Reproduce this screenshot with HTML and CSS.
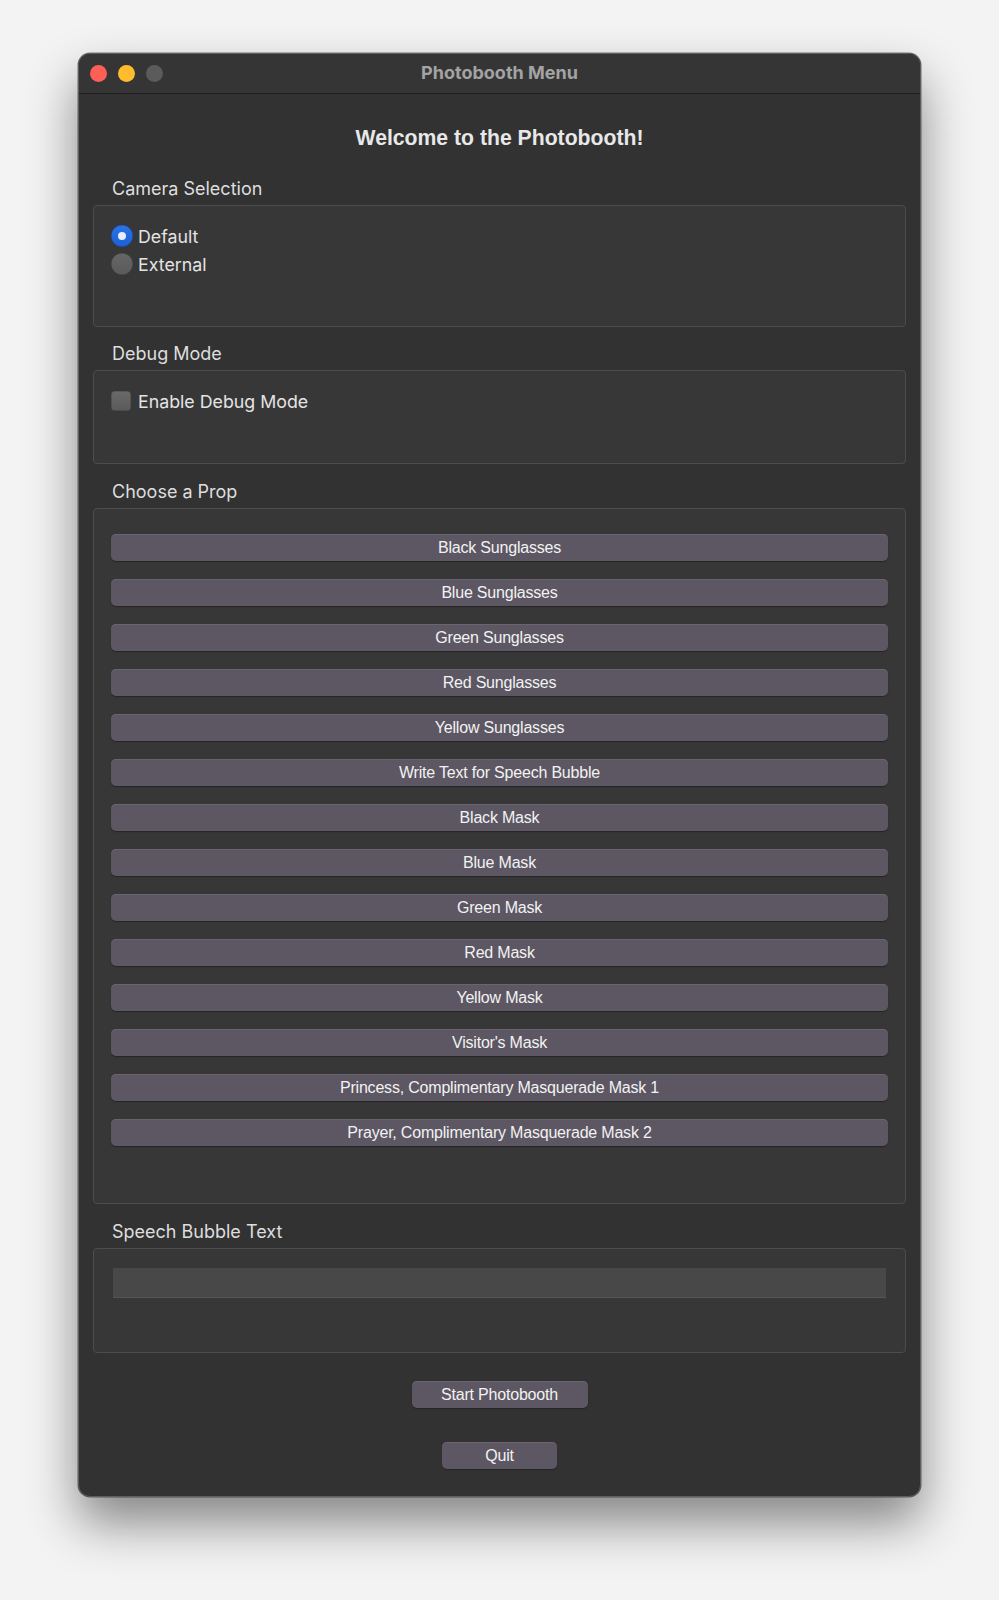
FILE: index.html
```html
<!DOCTYPE html>
<html>
<head>
<meta charset="utf-8">
<link rel="stylesheet" href="styles.css">
</head>
<body>
<div class="window">
  <div class="titlebar">
    <div class="lights">
      <span class="light red"></span>
      <span class="light yellow"></span>
      <span class="light gray"></span>
    </div>
    <div class="title">Photobooth Menu</div>
  </div>
  <div class="content">
    <h1 class="heading">Welcome to the Photobooth!</h1>

    <div class="label">Camera Selection</div>
    <div class="group group-camera">
      <div class="row"><span class="radio checked"></span><span class="opt">Default</span></div>
      <div class="row"><span class="radio"></span><span class="opt">External</span></div>
    </div>

    <div class="label">Debug Mode</div>
    <div class="group group-debug">
      <div class="row"><span class="checkbox"></span><span class="opt opt-check">Enable Debug Mode</span></div>
    </div>

    <div class="label">Choose a Prop</div>
    <div class="group group-props">
      <button class="btn">Black Sunglasses</button>
      <button class="btn">Blue Sunglasses</button>
      <button class="btn">Green Sunglasses</button>
      <button class="btn">Red Sunglasses</button>
      <button class="btn">Yellow Sunglasses</button>
      <button class="btn">Write Text for Speech Bubble</button>
      <button class="btn">Black Mask</button>
      <button class="btn">Blue Mask</button>
      <button class="btn">Green Mask</button>
      <button class="btn">Red Mask</button>
      <button class="btn">Yellow Mask</button>
      <button class="btn">Visitor's Mask</button>
      <button class="btn">Princess, Complimentary Masquerade Mask 1</button>
      <button class="btn">Prayer, Complimentary Masquerade Mask 2</button>
    </div>

    <div class="label">Speech Bubble Text</div>
    <div class="group group-speech">
      <div class="textfield"></div>
    </div>

    <div class="actions">
      <button class="btn btn-start">Start Photobooth</button>
      <button class="btn btn-quit">Quit</button>
    </div>
  </div>
</div>
</body>
</html>
```

FILE: styles.css
```css
* { box-sizing: border-box; }
html, body { margin: 0; padding: 0; }
body {
  background: #f3f3f3;
  width: 999px;
  height: 1600px;
  padding-top: 53px;
  padding-left: 78px;
  font-family: "Inter", "Noto Sans", sans-serif;
}
.window {
  width: 843px;
  height: 1444px;
  background: #323232;
  border: 1px solid #5e5e5e;
  border-radius: 12px;
  box-shadow: 0 26px 50px rgba(0,0,0,0.45), 0 0 0 0.5px rgba(0,0,0,0.5);
  overflow: hidden;
  display: flex;
  flex-direction: column;
}
.titlebar {
  position: relative;
  height: 40px;
  flex: none;
  background: #353535;
  border-bottom: 1px solid #1c1c1c;
  display: flex;
  align-items: center;
}
.lights {
  display: flex;
  gap: 11px;
  padding-left: 11px;
}
.light {
  width: 17px;
  height: 17px;
  border-radius: 50%;
  display: block;
}
.red { background: #fe5f57; }
.yellow { background: #febc2e; }
.gray { background: #5b5b5b; }
.title {
  position: absolute;
  left: 0; right: 0; top: 0; bottom: 2px;
  display: flex;
  align-items: center;
  justify-content: center;
  font-weight: 700;
  font-size: 18px;
  color: #a3a3a3;
}
.content {
  display: flex;
  flex-direction: column;
  padding: 31px 14px 0 14px;
}
.heading {
  margin: 0 0 27px 0;
  text-align: center;
  font-family: "Liberation Sans", Arial, sans-serif;
  font-weight: 700;
  font-size: 21.2px;
  line-height: 26px;
  color: #e8e8e8;
}
.label {
  height: 22px;
  line-height: 22px;
  font-size: 18px;
  color: #dedede;
  padding-left: 19px;
  margin-bottom: 5px;
}
.group {
  background: #373737;
  border: 1px solid #4c4c4c;
  border-radius: 4px;
  padding-left: 17px;
  padding-right: 17px;
  margin-bottom: 16px;
}
.group-camera { height: 122px; padding-top: 16px; }
.group-debug { height: 94px; padding-top: 16px; margin-bottom: 17px; }
.group-props {
  height: 696px;
  padding-top: 25px;
  display: flex;
  flex-direction: column;
  gap: 18px;
  margin-bottom: 17px;
}
.group-speech { height: 105px; padding: 19px 19px 0 19px; margin-bottom: 28px; }
.row {
  height: 28px;
  display: flex;
  align-items: center;
}
.radio {
  width: 22px;
  height: 22px;
  border-radius: 50%;
  background: linear-gradient(#666666, #5a5a5a);
  box-shadow: inset 0 0 0 0.5px rgba(0,0,0,0.3);
  position: relative;
  flex: none;
}
.radio.checked {
  background: linear-gradient(#2a74ea, #1c5fd2);
}
.radio.checked::after {
  content: "";
  position: absolute;
  width: 8px;
  height: 8px;
  border-radius: 50%;
  background: #e6eeff;
  left: 7px;
  top: 7px;
}
.opt {
  margin-left: 5px;
  font-size: 17.8px;
  color: #e4e4e4;
}
.checkbox {
  width: 20px;
  height: 20px;
  border-radius: 4px;
  background: linear-gradient(#6a6a6a, #5a5a5a);
  box-shadow: inset 0 0 0 0.5px rgba(0,0,0,0.3);
  flex: none;
}
.opt-check { margin-left: 7px; }
.btn {
  display: block;
  width: 100%;
  height: 27px;
  margin: 0;
  padding: 0 0 1px 0;
  border: none;
  border-radius: 5px;
  background: #5c5763;
  box-shadow: inset 0 1px 0 #69646f, 0 1px 1px #252525;
  color: #f2f2f2;
  font-family: "Liberation Sans", Arial, sans-serif;
  font-size: 16px;
  letter-spacing: -0.2px;
  line-height: 25px;
  text-align: center;
}
.textfield {
  height: 30px;
  background: #484848;
  border-bottom: 1px solid #555555;
}
.actions {
  display: flex;
  flex-direction: column;
  align-items: center;
  gap: 34px;
}
.btn-start { width: 176px; }
.btn-quit { width: 115px; }
```
